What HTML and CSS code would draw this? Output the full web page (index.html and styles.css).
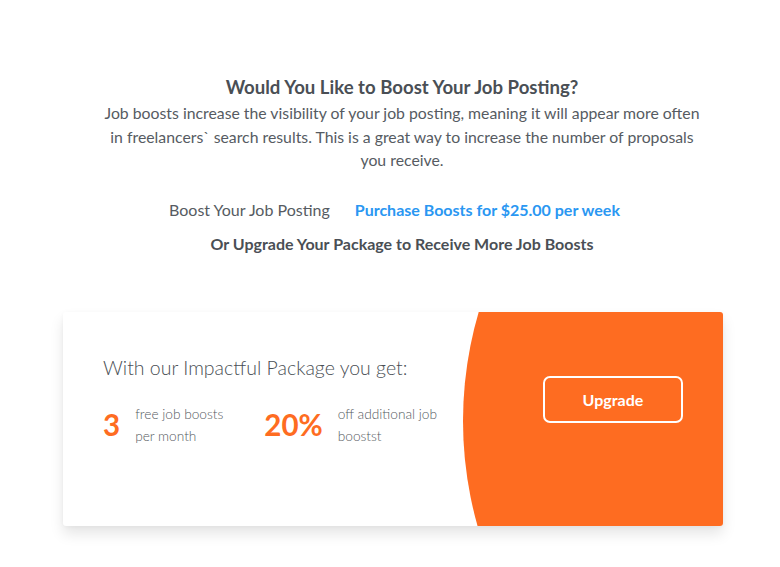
FILE: index.html
```html
<!DOCTYPE html>
<html>
<head>
<meta charset="utf-8">
<link rel="stylesheet" href="styles.css">
</head>
<body>
<div class="page">
  <section class="intro">
    <h1 class="title">Would You Like to Boost Your Job Posting?</h1>
    <p class="desc">Job boosts increase the visibility of your job posting, meaning it will appear more often in freelancers` search results. This is a great way to increase the number of proposals you receive.</p>
    <div class="boost-row">
      <span class="boost-label">Boost Your Job Posting</span>
      <a class="boost-link" href="#">Purchase Boosts for $25.00 per week</a>
    </div>
    <p class="or-upgrade">Or Upgrade Your Package to Receive More Job Boosts</p>
  </section>
  <section class="card">
    <div class="circle"></div>
    <div class="card-left">
      <h2 class="card-title">With our Impactful Package you get:</h2>
      <div class="stats">
        <div class="stat">
          <span class="stat-num">3</span>
          <span class="stat-text">free job boosts<br>per month</span>
        </div>
        <div class="stat">
          <span class="stat-num">20%</span>
          <span class="stat-text">off additional job<br>boostst</span>
        </div>
      </div>
    </div>
    <div class="card-right">
      <button class="upgrade-btn">Upgrade</button>
    </div>
  </section>
</div>
</body>
</html>
```

FILE: styles.css
```css
* { box-sizing: border-box; }
html, body { margin: 0; padding: 0; background: #fff; }
body {
  font-family: Lato, "Open Sans", sans-serif;
  color: #4b5057;
  width: 780px;
  height: 567px;
  overflow: hidden;
}
.page { padding-top: 75px; }
.intro {
  width: 602px;
  margin-left: 101px;
  text-align: center;
}
.title {
  margin: 0;
  font-size: 18.6px;
  line-height: 24px;
  font-weight: 700;
  color: #4a4f55;
}
.desc {
  margin: 2px 0 0;
  font-size: 15.8px;
  line-height: 23.5px;
  color: #565b62;
}
.boost-row {
  margin-top: 26px;
  display: flex;
  justify-content: center;
  gap: 25px;
  font-size: 16px;
  line-height: 24px;
  padding-right: 15px;
}
.boost-label { color: #565b62; }
.boost-link {
  color: #2a97f2;
  font-weight: 700;
  text-decoration: none;
}
.or-upgrade {
  margin: 10px 0 0;
  font-size: 16px;
  line-height: 24px;
  font-weight: 700;
  color: #4a4f55;
}
.card {
  position: relative;
  overflow: hidden;
  margin: 56px 0 0 63px;
  width: 660px;
  height: 214px;
  background: #fff;
  border-radius: 3px;
  box-shadow: 0 8px 14px rgba(0, 0, 0, 0.10), 0 1px 4px rgba(0, 0, 0, 0.04);
  display: flex;
  justify-content: space-between;
}
.circle {
  position: absolute;
  left: 400px;
  top: -277px;
  width: 772px;
  height: 772px;
  border-radius: 50%;
  background: #fe6c21;
}
.card-left {
  position: relative;
  padding: 44px 0 0 40px;
}
.card-title {
  margin: 0;
  font-size: 19.5px;
  line-height: 24px;
  font-weight: 300;
  color: #4a4f55;
}
.stats {
  margin-top: 23px;
  display: flex;
  gap: 41px;
}
.stat {
  display: flex;
  align-items: center;
  gap: 15px;
}
.stat-num {
  font-size: 29.5px;
  font-weight: 700;
  color: #fe6c21;
  line-height: 1;
}
.stat-text {
  font-size: 13.7px;
  line-height: 22px;
  font-weight: 300;
  color: #555a61;
}
.card-right {
  position: relative;
  padding: 64px 40px 0 0;
}
.upgrade-btn {
  width: 140px;
  height: 47px;
  background: transparent;
  border: 2px solid #fff;
  border-radius: 7px;
  color: #fff;
  font-family: Lato, sans-serif;
  font-size: 16px;
  font-weight: 700;
  cursor: pointer;
}
```
